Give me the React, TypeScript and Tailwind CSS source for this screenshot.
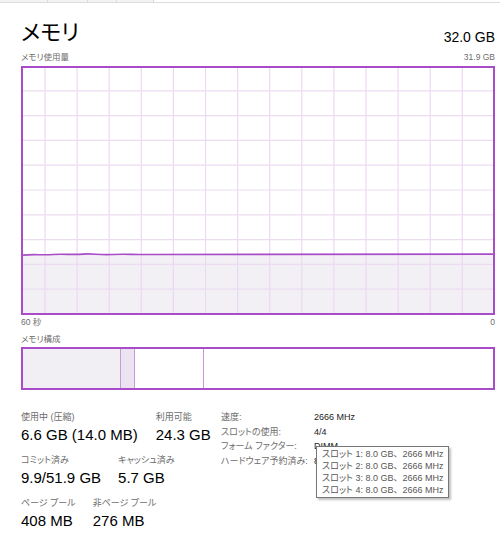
import React from "react";

const font = "font-['Liberation_Sans','Noto_Sans_CJK_JP',sans-serif] [font-feature-settings:'palt']";

const vLines = Array.from({ length: 14 }, (_, i) => 22 + i * 32.1);
const hLines = Array.from({ length: 9 }, (_, i) => 22.8 + i * 24.8);

function UsageGraph() {
  const w = 470;
  const h = 245;
  const top = 186.5;
  // slight wobble on the left side of the line
  const line = `M0 ${top + 0.6} C10 ${top - 0.6} 20 ${top + 0.8} 30 ${top} S50 ${top + 0.5} 60 ${top - 0.4} S75 ${top + 0.8} 90 ${top} S110 ${top + 0.4} 120 ${top} L${w} ${top - 0.4}`;
  return (
    <div className="mt-[3px] h-[249px] border-2 border-[#a94cc9]">
      <svg width={w} height={h} className="block">
        <path d={`${line} L${w} ${h} L0 ${h} Z`} fill="#f2f0f4" />
        {vLines.map((x) => (
          <line key={x} x1={x} y1={0} x2={x} y2={h} stroke="#ecd9f1" strokeWidth={1.2} />
        ))}
        {hLines.map((y) => (
          <line key={y} x1={0} y1={y} x2={w} y2={y} stroke="#ecdcf1" strokeWidth={1.2} />
        ))}
        <path d={line} fill="none" stroke="#a94cc9" strokeWidth={1.6} />
      </svg>
    </div>
  );
}

function Stat({ label, value }: { label: string; value: string }) {
  return (
    <div className="flex flex-col">
      <div className="h-[13px] text-[9px] leading-[13px] text-[#6d6d6d]">{label}</div>
      <div className="h-[30px] text-[15px] leading-[22px] text-black">{value}</div>
    </div>
  );
}

const slots = [1, 2, 3, 4];

export default function App() {
  return (
    <div className={`relative h-[539px] w-[500px] overflow-hidden bg-white ${font}`}>
      {/* tab strip remnants */}
      <div className="flex h-[3px]">
        <div className="w-[48px] border-b border-r border-[#dcdcdc] bg-[#f3f3f3]" />
        <div className="w-[40px] border-b border-r border-[#dcdcdc] bg-[#f3f3f3]" />
        <div className="w-[29px] border-b border-r border-[#dcdcdc] bg-[#f3f3f3]" />
        <div className="w-[37px] border-b border-r border-[#dcdcdc] bg-[#f3f3f3]" />
        <div className="flex-1 border-b border-[#dcdcdc]" />
      </div>

      <div className="px-[21px] pr-[5px]">
        <div className="mt-[16px] flex items-end justify-between">
          <div className="text-[22px] leading-[28px] text-black">メモリ</div>
          <div className="pb-[2px] text-[14px] leading-[16px] text-black">32.0 GB</div>
        </div>

        <div className="mt-[4px] flex justify-between text-[8.5px] leading-[12px] text-[#6d6d6d]">
          <span>メモリ使用量</span>
          <span>31.9 GB</span>
        </div>

        <UsageGraph />

        <div className="mt-[1px] flex justify-between text-[8.5px] leading-[12px] text-[#6d6d6d]">
          <span>60 秒</span>
          <span>0</span>
        </div>

        <div className="mt-[5px] text-[8.5px] leading-[12px] text-[#6d6d6d]">メモリ構成</div>

        <div className="mt-[2px] flex h-[43px] border-2 border-[#a94cc9]">
          <div className="w-[97px] bg-[#f2eff4]" />
          <div className="w-[15px] border-x border-[#c79ad8] bg-[#ece3f0]" />
          <div className="w-[69px] border-r border-[#c993da]" />
          <div className="flex-1" />
        </div>

        <div className="mt-[21px] flex items-start">
          <div className="w-[200px]">
            <div className="flex gap-[18px]">
              <Stat label="使用中 (圧縮)" value="6.6 GB (14.0 MB)" />
              <Stat label="利用可能" value="24.3 GB" />
            </div>
            <div className="flex gap-[17px]">
              <Stat label="コミット済み" value="9.9/51.9 GB" />
              <Stat label="キャッシュ済み" value="5.7 GB" />
            </div>
            <div className="flex gap-[17px]">
              <Stat label="ページ プール" value="408 MB" />
              <Stat label="非ページ プール" value="276 MB" />
            </div>
          </div>

          <div className="-mt-[1px] grid grid-cols-[93px_auto] content-start text-[9px] leading-[14.7px] text-[#6d6d6d]">
            <span>速度:</span>
            <span className="text-[#1a1a1a]">2666 MHz</span>
            <span>スロットの使用:</span>
            <span className="text-[#1a1a1a]">4/4</span>
            <span>フォーム ファクター:</span>
            <span className="text-[#1a1a1a]">DIMM</span>
            <span>ハードウェア予約済み:</span>
            <span className="text-[#1a1a1a]">81.9 MB</span>
          </div>
        </div>
      </div>

      {/* tooltip */}
      <div className="absolute left-[316px] top-[446px] whitespace-nowrap border border-[#767676] bg-white px-[5px] py-[1px] text-[9px] leading-[12px] text-[#575757] shadow-[2px_2px_2px_rgba(0,0,0,0.25)]">
        {slots.map((n) => (
          <div key={n}>
            スロット {n}: 8.0 GB<span className="[font-feature-settings:normal]">、</span>2666 MHz
          </div>
        ))}
      </div>
    </div>
  );
}
